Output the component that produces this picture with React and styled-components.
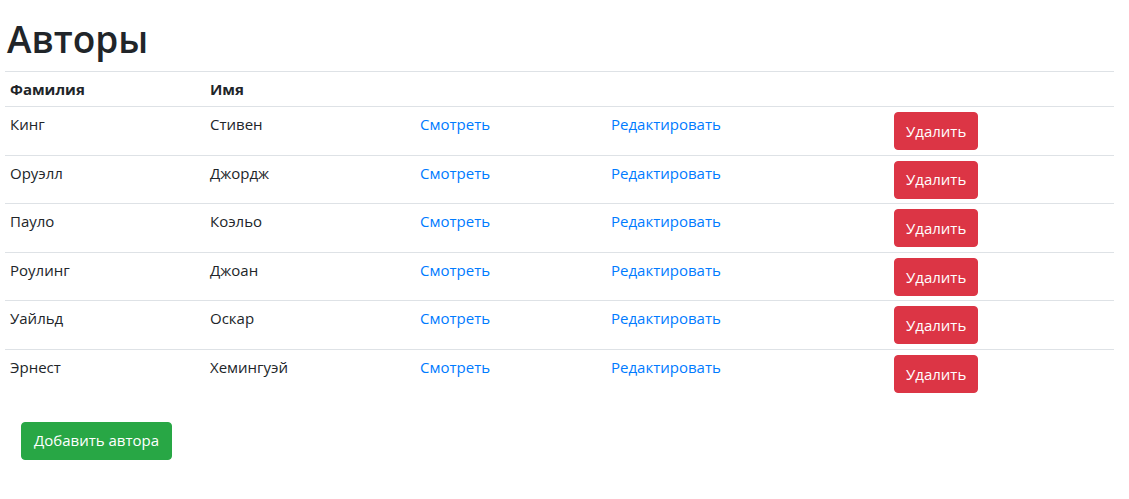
import React from "react";
import styled, { createGlobalStyle } from "styled-components";

const GlobalStyle = createGlobalStyle`
  body {
    margin: 0;
    background: #fff;
    font-family: "Open Sans", "Noto Sans", sans-serif;
    font-size: 16px;
    line-height: 1.5;
    color: #212529;
  }
`;

const Page = styled.div`
  padding: 15px 15px 40px 5px;
`;

const Title = styled.h1`
  margin: 0 0 8px 2px;
  font-size: 37px;
  font-weight: 600;
  line-height: 48px;
`;

const Table = styled.table`
  width: 1109px;
  table-layout: fixed;
  border-collapse: collapse;
  margin-bottom: 24px;
`;

const HeadCell = styled.th`
  text-align: left;
  font-weight: 700;
  font-size: 15px;
  line-height: 24px;
  padding: 5px;
  border-top: 1px solid #dee2e6;
  border-bottom: 1px solid #dee2e6;
  width: ${(p) => p.$w || "auto"};
`;

const Cell = styled.td`
  vertical-align: top;
  padding: 5px 5px 4.6px;
  border-top: 1px solid #dee2e6;
  font-size: 15px;
  line-height: 24px;
`;

const ActionLink = styled.a`
  color: #007bff;
  text-decoration: none;
  cursor: pointer;
`;

const Button = styled.button`
  display: inline-block;
  font-family: inherit;
  font-size: 15px;
  line-height: 1.5;
  color: #fff;
  border: 1px solid ${(p) => (p.$variant === "danger" ? "#dc3545" : "#28a745")};
  background: ${(p) => (p.$variant === "danger" ? "#dc3545" : "#28a745")};
  border-radius: 4px;
  padding: 6px ${(p) => (p.$variant === "danger" ? "11px" : "12px")};
  height: 38px;
  cursor: pointer;
`;

const Footer = styled.div`
  padding-left: 16px;
`;

const authors = [
  ["Кинг", "Стивен"],
  ["Оруэлл", "Джордж"],
  ["Пауло", "Коэльо"],
  ["Роулинг", "Джоан"],
  ["Уайльд", "Оскар"],
  ["Эрнест", "Хемингуэй"],
];

export default function App() {
  return (
    <Page>
      <GlobalStyle />
      <Title>Авторы</Title>
      <Table>
        <thead>
          <tr>
            <HeadCell $w="190px">Фамилия</HeadCell>
            <HeadCell $w="200px">Имя</HeadCell>
            <HeadCell $w="181px" />
            <HeadCell $w="273px" />
            <HeadCell />
          </tr>
        </thead>
        <tbody>
          {authors.map(([last, first]) => (
            <tr key={last}>
              <Cell>{last}</Cell>
              <Cell>{first}</Cell>
              <Cell>
                <ActionLink>Смотреть</ActionLink>
              </Cell>
              <Cell>
                <ActionLink>Редактировать</ActionLink>
              </Cell>
              <Cell>
                <Button $variant="danger">Удалить</Button>
              </Cell>
            </tr>
          ))}
        </tbody>
      </Table>
      <Footer>
        <Button $variant="success">Добавить автора</Button>
      </Footer>
    </Page>
  );
}
